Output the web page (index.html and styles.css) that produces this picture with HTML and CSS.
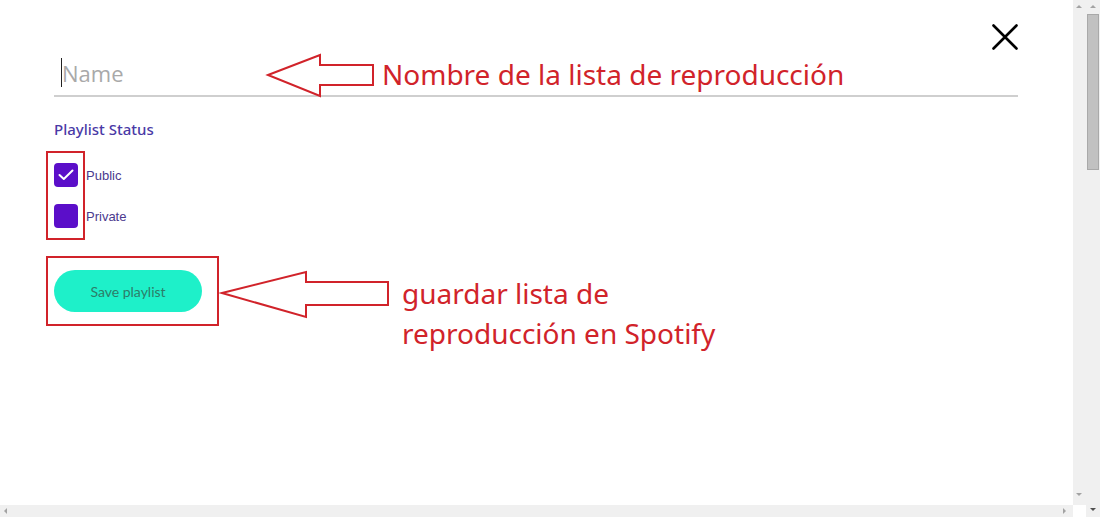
FILE: index.html
```html
<!DOCTYPE html>
<html lang="en">
<head>
    <meta charset="UTF-8">
    <meta name="viewport" content="width=device-width, initial-scale=1.0">
    <title>Jammming - Save playlist</title>
    <link rel="stylesheet" href="styles.css">
</head>
<body>
    <div class="window">
        <div class="viewport">
            <div class="pane">
                <main class="modal">
                    <div class="topBar">
                        <button class="closeBtn" aria-label="Close">
                            <svg width="26" height="26" viewBox="0 0 26 26">
                                <path d="M1.5 1.5 L24.5 24.5 M24.5 1.5 L1.5 24.5" stroke="#000" stroke-width="2.6" stroke-linecap="round"/>
                            </svg>
                        </button>
                    </div>
                    <div class="nameField">
                        <span class="caret"></span>
                        <input type="text" class="nameInput" placeholder="Name">
                    </div>
                    <p class="statusTitle">Playlist Status</p>
                    <div class="statusList">
                        <label class="statusRow">
                            <span class="box checked">
                                <svg width="16" height="12" viewBox="0 0 16 12">
                                    <path d="M1.5 6 L5.8 10 L14.5 1.5" fill="none" stroke="#fff" stroke-width="2" stroke-linecap="round" stroke-linejoin="round"/>
                                </svg>
                            </span>
                            <span class="statusLabel">Public</span>
                        </label>
                        <label class="statusRow">
                            <span class="box"></span>
                            <span class="statusLabel">Private</span>
                        </label>
                    </div>
                    <button class="saveBtn">Save playlist</button>
                </main>
                <div class="hScroll">
                    <span class="arrow left"></span>
                    <span class="arrow right"></span>
                </div>
            </div>
            <div class="vScroll inner">
                <span class="arrow up"></span>
                <span class="arrow down"></span>
                <span class="corner"></span>
            </div>
        </div>
        <div class="vScroll outer">
            <span class="arrow up"></span>
            <span class="thumb"></span>
            <span class="arrow down dark"></span>
        </div>

        <!-- annotations drawn over the screenshot -->
        <svg class="marks" width="1073" height="505" viewBox="0 0 1073 505">
            <g fill="#fff" stroke="#d1232a" stroke-width="2">
                <rect x="47" y="152" width="37" height="87"/>
                <rect x="47" y="257" width="171" height="68"/>
                <polygon points="268,75 320,55 320,65 373,65 373,85 320,85 320,96"/>
                <polygon points="222,293 306,272 306,282 388,282 388,305 306,305 306,317"/>
            </g>
        </svg>
        <div class="note noteName">Nombre de la lista de reproducción</div>
        <div class="note noteSave">guardar lista de<br>reproducción en Spotify</div>
    </div>
</body>
</html>
```

FILE: styles.css
```css
body {
    margin: 0;
    background-color: #fff;
    overflow: hidden;
}
.window {
    position: relative;
    display: flex;
    width: 1100px;
    height: 517px;
}
.viewport {
    display: flex;
    width: 1086px;
}
.pane {
    display: flex;
    flex-direction: column;
    width: 1073px;
}
.modal {
    height: 505px;
    padding: 0 55px 0 54px;
    box-sizing: border-box;
    display: flex;
    flex-direction: column;
    align-items: flex-start;
}
.topBar {
    align-self: stretch;
    display: flex;
    justify-content: flex-end;
    padding-top: 24px;
}
.closeBtn {
    border: none;
    background: none;
    padding: 0;
    width: 26px;
    height: 26px;
    cursor: pointer;
}
.nameField {
    align-self: stretch;
    display: flex;
    align-items: center;
    height: 33px;
    padding-bottom: 6px;
    margin-top: 6px;
    border-bottom: 2px solid #cfcfcf;
}
.caret {
    width: 1px;
    height: 29px;
    margin-left: 7px;
    background-color: #222;
}
.nameInput {
    flex: 1;
    border: none;
    outline: none;
    padding: 0;
    font-family: "Open Sans", sans-serif;
    font-size: 22px;
    color: #333;
    background: transparent;
}
.nameInput::placeholder {
    color: #a9a9a9;
}
.statusTitle {
    margin: 22px 0 0 0;
    font-family: "Noto Sans", sans-serif;
    font-size: 15px;
    font-weight: 500;
    line-height: 20px;
    color: #4a3aa6;
}
.statusList {
    display: flex;
    flex-direction: column;
    gap: 17px;
    margin-top: 24px;
}
.statusRow {
    display: flex;
    align-items: center;
    gap: 8px;
}
.box {
    width: 24px;
    height: 24px;
    border-radius: 4px;
    background-color: #5b0ec9;
    display: flex;
    align-items: center;
    justify-content: center;
}
.statusLabel {
    font-family: "Liberation Sans", Arial, sans-serif;
    font-size: 13px;
    color: #4b3a8e;
}
.saveBtn {
    margin-top: 42px;
    width: 148px;
    height: 42px;
    border: none;
    border-radius: 21px;
    background-color: #1ef0c9;
    color: #2c7c68;
    font-family: Lato, sans-serif;
    font-size: 14px;
    cursor: pointer;
}
.hScroll {
    position: relative;
    height: 12px;
    background-color: #f0f0f0;
}
.vScroll {
    position: relative;
    background-color: #f0f0f0;
}
.vScroll.inner {
    width: 13px;
    height: 505px;
}
.vScroll.outer {
    width: 14px;
    height: 517px;
}
.corner {
    position: absolute;
    left: 0;
    top: 505px;
    width: 13px;
    height: 12px;
    background-color: #fff;
}
.thumb {
    position: absolute;
    left: 1px;
    top: 14px;
    width: 10px;
    height: 154px;
    background-color: #c1c1c1;
    border: 1px solid #a9a9a9;
}
.arrow {
    position: absolute;
    width: 0;
    height: 0;
}
.arrow.up {
    top: 5px;
    left: 3px;
    border-left: 3px solid transparent;
    border-right: 3px solid transparent;
    border-bottom: 3px solid #a3a3a3;
}
.vScroll.outer .arrow.up {
    left: 4px;
}
.arrow.down {
    top: 493px;
    left: 3px;
    border-left: 3px solid transparent;
    border-right: 3px solid transparent;
    border-top: 3px solid #a3a3a3;
}
.arrow.down.dark {
    top: 508px;
    left: 4px;
    border-top-color: #505050;
}
.arrow.left {
    top: 3px;
    left: 4px;
    border-top: 3px solid transparent;
    border-bottom: 3px solid transparent;
    border-right: 3px solid #a3a3a3;
}
.arrow.right {
    top: 3px;
    left: 1063px;
    border-top: 3px solid transparent;
    border-bottom: 3px solid transparent;
    border-left: 3px solid #a3a3a3;
}
.marks {
    position: absolute;
    left: 0;
    top: 0;
    pointer-events: none;
}
.marks rect {
    fill: none;
}
.note {
    position: absolute;
    font-family: "Noto Sans", sans-serif;
    font-size: 28px;
    color: #d1232a;
    white-space: nowrap;
}
.noteName {
    left: 382px;
    top: 54px;
    line-height: 40px;
}
.noteSave {
    left: 402px;
    top: 273px;
    line-height: 40px;
}
```
